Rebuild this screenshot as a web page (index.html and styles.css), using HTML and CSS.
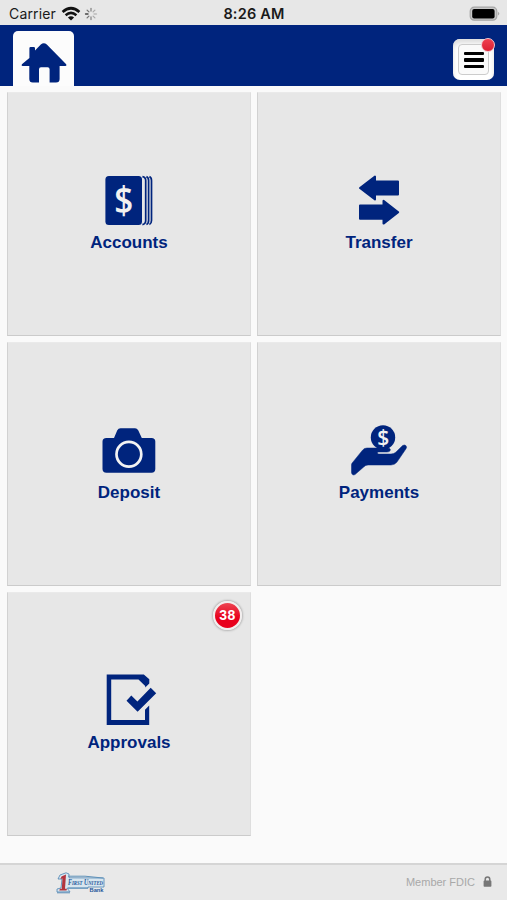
FILE: index.html
```
<!DOCTYPE html>
<html lang="en">
<head>
  <meta charset="UTF-8">
  <meta name="viewport" content="width=device-width, initial-scale=1.0">
  <title>First United Bank</title>
  <link rel="stylesheet" href="styles.css">
</head>
<body>
  <div class="status-bar">
    <div class="status-left">
      <span class="carrier">Carrier</span>
      <svg class="wifi" width="20" height="16" viewBox="0 0 20 16">
        <path d="M1.6 5.9 Q10 -1.4 18.4 5.9" fill="none" stroke="#111" stroke-width="2.7"/>
        <path d="M4.6 9.2 Q10 4.5 15.4 9.2" fill="none" stroke="#111" stroke-width="2.5"/>
        <path d="M10 14.6 L6.9 11.5 Q10 9 13.1 11.5 Z" fill="#111"/>
      </svg>
      <svg class="spinner" width="14" height="14" viewBox="-7 -7 14 14" stroke-width="1.3" stroke-linecap="round">
        <path d="M0 -3V-5.5" stroke="#888"/>
        <path d="M2.1 -2.1L3.9 -3.9" stroke="#aaa"/>
        <path d="M3 0H5.5" stroke="#bbb"/>
        <path d="M2.1 2.1L3.9 3.9" stroke="#aaa"/>
        <path d="M0 3V5.5" stroke="#888"/>
        <path d="M-2.1 2.1L-3.9 3.9" stroke="#777"/>
        <path d="M-3 0H-5.5" stroke="#444"/>
        <path d="M-2.1 -2.1L-3.9 -3.9" stroke="#777"/>
      </svg>
    </div>
    <span class="time">8:26 AM</span>
    <svg class="battery" width="32" height="16" viewBox="0 0 32 16">
      <rect x="1.2" y="1.2" width="26.6" height="13" rx="4" fill="#c8c8c8" stroke="#a5a5a5" stroke-width="1.2"/>
      <rect x="3.2" y="3" width="22.4" height="9.4" rx="2" fill="#000"/>
      <path d="M29.2 5.8 Q31.4 7.7 29.2 9.6 Z" fill="#999"/>
    </svg>
  </div>

  <header>
    <a href="#home" class="home-tab" aria-label="Home">
      <svg width="46" height="41" viewBox="0 0 46 41">
        <path d="M8.4 16 V6.2 Q8.4 5 9.6 5 H12.8 Q14 5 14 6.2 V8.6 L19.8 2.6 Q22.8 0 25.8 2.6 L45.2 22.2 Q46 23.7 44.5 24 H38.6 V37 Q38.6 40.6 35 40.6 H28.6 V27.2 Q28.6 25.2 26.6 25.2 H20 Q18 25.2 18 27.2 V40.6 H11.8 Q8.3 40.6 8.3 37 V24 H1.5 Q0 23.7 .9 22.3 Z" fill="#00247d"/>
      </svg>
    </a>
    <button class="menu-button" aria-label="Menu">
      <span class="menu-inner">
        <span class="menu-line"></span>
        <span class="menu-line"></span>
        <span class="menu-line"></span>
      </span>
      <span class="menu-dot"></span>
    </button>
  </header>

  <main>
    <a href="#accounts" class="tile">
      <svg class="tile-icon" viewBox="99 172 60 58">
        <rect x="105.4" y="176" width="36.6" height="49" rx="3.5"/>
        <path class="line" d="M142.4 176.6 Q145.7 177 145.7 180.5 V220.5 Q145.7 224 142.4 224.6 M146.4 176.6 Q148.6 177.5 148.6 180.5 V220.5 Q148.6 223.5 146.4 224.6 M149.4 176.6 Q151.5 177.5 151.5 180.5 V220.5 Q151.5 223.5 149.4 224.6"/>
        <text class="dollar" x="123.8" y="214" text-anchor="middle" font-size="38" textLength="19" lengthAdjust="spacingAndGlyphs">$</text>
      </svg>
      <span class="tile-label">Accounts</span>
    </a>
    <a href="#transfer" class="tile">
      <svg class="tile-icon" viewBox="349 172 60 58">
        <path class="joined" d="M360 188 L375 176.6 V181.4 H398 V194.6 H375 V199.4 Z"/>
        <path class="joined" d="M398.2 212.2 L383.5 200.8 V205.6 H360 V218.8 H383.5 V223.6 Z"/>
      </svg>
      <span class="tile-label">Transfer</span>
    </a>
    <a href="#deposit" class="tile">
      <svg class="tile-icon" viewBox="99 422 60 58">
        <path d="M105.5 438 H114 L117.3 430.3 Q118.3 428.2 120.5 428.2 H135 Q137 428.2 138.2 430.3 L141.8 438 H151.5 Q155.3 438 155.3 441.5 V469 Q155.3 472.7 151.5 472.7 H106.5 Q102.5 472.7 102.5 469 V441.5 Q102.5 438 106.5 438 Z"/>
        <circle class="lens" cx="128.9" cy="454.3" r="12.4"/>
      </svg>
      <span class="tile-label">Deposit</span>
    </a>
    <a href="#payments" class="tile">
      <svg class="tile-icon" viewBox="349 422 60 58">
        <circle cx="383" cy="437.4" r="12.2"/>
        <text class="dollar coin" x="383.2" y="445" text-anchor="middle" font-size="21">$</text>
        <path class="hand" d="M352 463.2 L362.5 450.2 Q364.2 448 367 448 H387.5 Q391 448.2 390.2 450.6 Q389.6 452 387 452 H378 Q376.8 452.7 378 454 H391 Q394 454 395.8 452.2 L402.6 445.6 Q404.3 444.3 406 445.7 Q407.2 447.1 406 448.8 L396.8 462.3 Q394.6 465 391 465 H368 Q365.5 465 364 466.7 L355 474.6 Q352 475.8 351.5 472.8 V465 Q351.5 464 352 463.2 Z"/>
      </svg>
      <span class="tile-label">Payments</span>
    </a>
    <a href="#approvals" class="tile">
      <svg class="tile-icon" viewBox="99 672 60 58">
        <path d="M106.7 674.4 H143.8 L149.3 679.3 V683.5 L145.2 687.5 V686 L138.5 679.4 H111.2 V720 H145 V709.8 L149.2 705.5 V725 H106.7 Z"/>
        <path d="M126.5 700.7 L131.3 695.6 L137.4 701.5 L150.7 687.8 L156.2 693.2 L137.6 711.7 Z"/>
      </svg>
      <span class="tile-label">Approvals</span>
      <span class="badge">38</span>
    </a>
  </main>

  <footer>
    <svg class="logo" width="50" height="24" viewBox="0 0 50 24">
      <path d="M4 4 L10 1.8 L13 3 V6.8 L48 7 V16 H32 V17.2 H11 L14 20.8 L1 21 V18 L5 17 L6 8 L2 8 Z" fill="#d8e6ef" stroke="#4d83b3" stroke-width=".8"/>
      <path d="M5.5 5.5 L10 3.5 L9 17.8 H11 L10.5 19.4 H3.2 L4 17.8 H5.8 L6.5 7.5 L4.5 8 Z" fill="#b2343e"/>
      <path d="M12 5.2 H29 L47 7 M12 17 H32 M1 21.8 H14" stroke="#5e91b9" stroke-width="1" fill="none"/>
      <text class="logo-name" x="12" y="14" font-size="7.4" textLength="35" lengthAdjust="spacingAndGlyphs">F<tspan font-size="6">IRST</tspan> U<tspan font-size="6">NITED</tspan></text>
      <text class="logo-bank" x="33.5" y="21.4" font-size="5.5" textLength="14" lengthAdjust="spacingAndGlyphs">Bank</text>
    </svg>
    <div class="fdic">
      <span>Member FDIC</span>
      <svg width="9" height="12" viewBox="0 0 9 12">
        <path d="M2.2 5.5 V3.4 Q2.2 1 4.5 1 Q6.8 1 6.8 3.4 V5.5" fill="none" stroke="#777" stroke-width="1.5"/>
        <rect x=".6" y="4.6" width="7.8" height="6.2" rx=".8" fill="#777"/>
      </svg>
    </div>
  </footer>
</body>
</html>
```
FILE: styles.css
```
* {
  box-sizing: border-box;
}

body {
  margin: 0;
  height: 900px;
  display: flex;
  flex-direction: column;
  background-color: #fafafa;
  font-family: "Liberation Sans", Arial, sans-serif;
  overflow: hidden;
}

a {
  text-decoration: none;
}

.status-bar {
  height: 25px;
  display: grid;
  grid-template-columns: 1fr auto 1fr;
  align-items: center;
  padding: 2px 6px 0 9px;
  background-color: #e7e7e7;
  color: #1a1a1a;
  font-family: Inter, "Liberation Sans", sans-serif;
}

.status-left {
  display: flex;
  align-items: center;
}

.carrier {
  font-size: 14px;
  letter-spacing: 0.15px;
}

.wifi {
  margin-left: 5px;
}

.spinner {
  margin-left: 3px;
}

.time {
  font-size: 14.5px;
  font-weight: 600;
  letter-spacing: 0.2px;
  margin-right: 2px;
}

.battery {
  justify-self: end;
}

header {
  height: 61px;
  display: flex;
  justify-content: space-between;
  align-items: flex-start;
  padding: 6px 13px 0;
  background-color: #00247d;
}

.home-tab {
  width: 61px;
  height: 55px;
  display: flex;
  justify-content: center;
  padding-top: 11px;
  background-color: #fcfcfc;
  border-radius: 5px 5px 0 0;
}

.menu-button {
  position: relative;
  width: 41px;
  height: 41px;
  margin-top: 8px;
  padding: 5px;
  border: none;
  border-radius: 7px;
  background-color: #fff;
  box-shadow: inset 0 4px 5px #ddd;
}

.menu-inner {
  height: 31px;
  display: flex;
  flex-direction: column;
  align-items: center;
  justify-content: center;
  gap: 3px;
  padding-top: 1px;
  background-color: #fafafa;
  border: 1px solid #ccc;
  border-radius: 4px;
}

.menu-line {
  width: 20px;
  height: 3.4px;
  border-radius: 1px;
  background-color: #000;
}

.menu-dot {
  position: absolute;
  top: -1px;
  right: -1px;
  width: 14px;
  height: 14px;
  border: 1px solid #f3c4cb;
  border-radius: 50%;
  background: linear-gradient(#ef4050, #dc1f32);
}

main {
  flex: 1;
  display: grid;
  grid-template-columns: 244px 244px;
  grid-auto-rows: 244px;
  gap: 6px;
  padding: 6px 7px 0;
}

.tile {
  position: relative;
  display: flex;
  flex-direction: column;
  align-items: center;
  padding-top: 79px;
  background-color: #e7e7e7;
  border: 1px solid #dedede;
  border-left-color: #d2d2d2;
  border-top-color: #eaeaea;
  border-bottom-color: #cbcbcb;
}

.tile-icon {
  width: 60px;
  height: 58px;
  fill: #00247d;
}

.tile-icon .line {
  fill: none;
  stroke: #00247d;
  stroke-width: 1.7;
}

.tile-icon .joined {
  stroke: #00247d;
  stroke-width: 2;
  stroke-linejoin: round;
}

.tile-icon .lens {
  fill: none;
  stroke: #f3f3f3;
  stroke-width: 2.7;
}

.tile-icon .hand {
  stroke: #00247d;
  stroke-width: 0.5;
}

.dollar {
  fill: #f1f1f1;
  font-family: "Open Sans", sans-serif;
  font-weight: 600;
}

.dollar.coin {
  font-weight: 600;
}

.tile-label {
  margin-top: 3px;
  font-size: 17px;
  line-height: 20px;
  font-weight: bold;
  color: #00247d;
}

.badge {
  position: absolute;
  top: 8px;
  right: 8px;
  width: 29px;
  height: 29px;
  border: 2px solid #f2eeee;
  border-radius: 50%;
  background: linear-gradient(#ed4552, #e8001c 60%);
  box-shadow: 0 0 2px 1px #b5b5b5;
  color: #fff;
  font-size: 14px;
  line-height: 25px;
  font-weight: bold;
  letter-spacing: 0.5px;
  text-align: center;
}

footer {
  height: 37px;
  display: flex;
  justify-content: space-between;
  align-items: center;
  padding: 0 15px 0 56px;
  background-color: #e9e9e9;
  border-top: 2px solid #d5d5d5;
}

.logo-name {
  fill: #24589b;
  font-family: "Liberation Serif", serif;
  font-weight: bold;
  font-style: italic;
}

.logo-bank {
  fill: #24589b;
  font-family: "Liberation Sans", sans-serif;
  font-weight: bold;
}

.fdic {
  display: flex;
  align-items: center;
  gap: 8px;
  padding-bottom: 2px;
  font-size: 11px;
  color: #a8a8a8;
}
```
